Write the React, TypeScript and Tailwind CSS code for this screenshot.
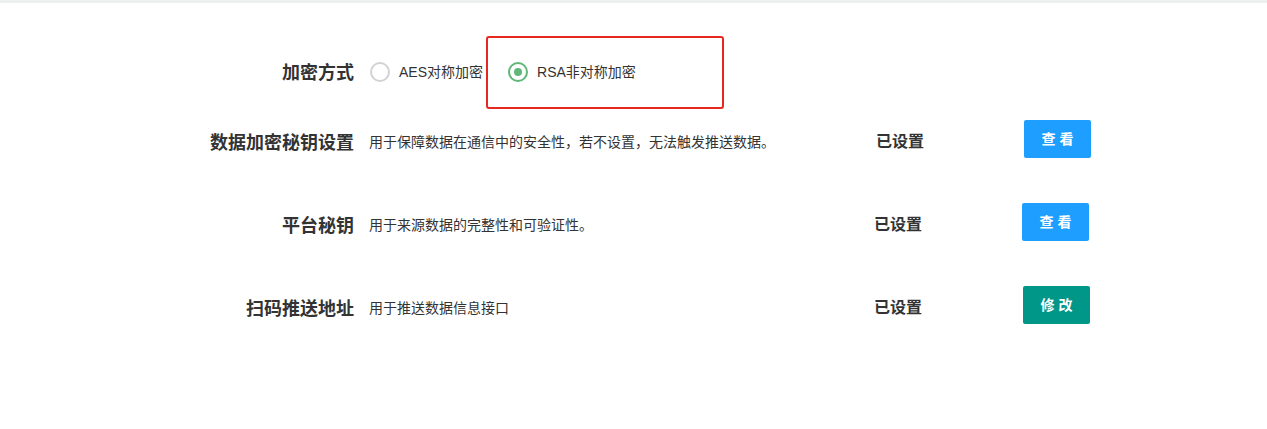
import React, { useState } from "react";

interface SettingRow {
  label: string;
  desc: string;
  status: string;
  action: string;
  tone: "blue" | "green";
  statusCls: string; // small per-row nudge, the source page isn't perfectly aligned
  btnCls: string;
}

const rows: SettingRow[] = [
  {
    label: "数据加密秘钥设置",
    desc: "用于保障数据在通信中的安全性，若不设置，无法触发推送数据。",
    status: "已设置",
    action: "查看",
    tone: "blue",
    statusCls: "w-[148px] pl-[1px]",
    btnCls: "ml-[1px]",
  },
  {
    label: "平台秘钥",
    desc: "用于来源数据的完整性和可验证性。",
    status: "已设置",
    action: "查看",
    tone: "blue",
    statusCls: "w-[148px] -ml-[1px]",
    btnCls: "",
  },
  {
    label: "扫码推送地址",
    desc: "用于推送数据信息接口",
    status: "已设置",
    action: "修改",
    tone: "green",
    statusCls: "w-[149px] -ml-[1px]",
    btnCls: "",
  },
];

const Radio: React.FC<{ checked: boolean; text: string; onClick: () => void }> = ({
  checked,
  text,
  onClick,
}) => (
  <div className="flex items-center cursor-pointer" onClick={onClick}>
    <span
      className={
        checked
          ? "w-[20px] h-[20px] rounded-full border-2 border-[#5fb878] flex items-center justify-center"
          : "w-[20px] h-[20px] rounded-full border-2 border-[#d2d2d2]"
      }
    >
      {checked && <span className="w-[8px] h-[8px] rounded-full bg-[#5fb878]" />}
    </span>
    <span className="ml-[9px] text-[14px] text-[#333]">{text}</span>
  </div>
);

const App: React.FC = () => {
  const [mode, setMode] = useState<"aes" | "rsa">("rsa");

  return (
    <div
      className="relative min-h-[429px] w-full bg-white"
      style={{ fontFamily: '"Liberation Sans", "Noto Sans CJK SC", sans-serif' }}
    >
      {/* top strip */}
      <div className="h-[3px] bg-[#eef0f0]" />

      <div className="pt-[50px]">
        {/* encryption mode */}
        <div className="flex items-center h-[38px]">
          <div className="w-[354px] pt-[2px] text-right text-[18px] leading-[18px] font-bold text-[#333]">
            加密方式
          </div>
          <div className="ml-[16px] flex items-center">
            <Radio checked={mode === "aes"} text="AES对称加密" onClick={() => setMode("aes")} />
            <div className="ml-[25px]">
              <Radio checked={mode === "rsa"} text="RSA非对称加密" onClick={() => setMode("rsa")} />
            </div>
          </div>
        </div>

        {/* setting rows */}
        <div className="mt-[29px] flex flex-col gap-[45px]">
          {rows.map((row) => (
            <div key={row.label} className="flex items-center h-[38px]">
              <div className="w-[354px] pt-[8px] text-right text-[18px] leading-[18px] font-bold text-[#333]">
                {row.label}
              </div>
              <div className="ml-[15px] w-[506px] pt-[6px] text-[14px] leading-[14px] text-[#333]">
                {row.desc}
              </div>
              <div className={`${row.statusCls} pt-[6px] text-[16px] leading-[16px] font-bold text-[#333]`}>
                {row.status}
              </div>
              <button
                className={
                  row.tone === "blue"
                    ? `${row.btnCls} w-[67px] h-[38px] rounded-[2px] bg-[#1e9fff] text-white text-[14px] font-semibold tracking-[4px] pl-[4px]`
                    : `${row.btnCls} w-[67px] h-[38px] rounded-[2px] bg-[#009688] text-white text-[14px] font-semibold tracking-[4px] pl-[4px]`
                }
              >
                {row.action}
              </button>
            </div>
          ))}
        </div>
      </div>

      {/* highlight annotation */}
      <div className="absolute left-[486px] top-[36px] w-[238px] h-[73px] border-[2.5px] border-[#e6281f] rounded-[3px] pointer-events-none" />
    </div>
  );
};

export default App;
